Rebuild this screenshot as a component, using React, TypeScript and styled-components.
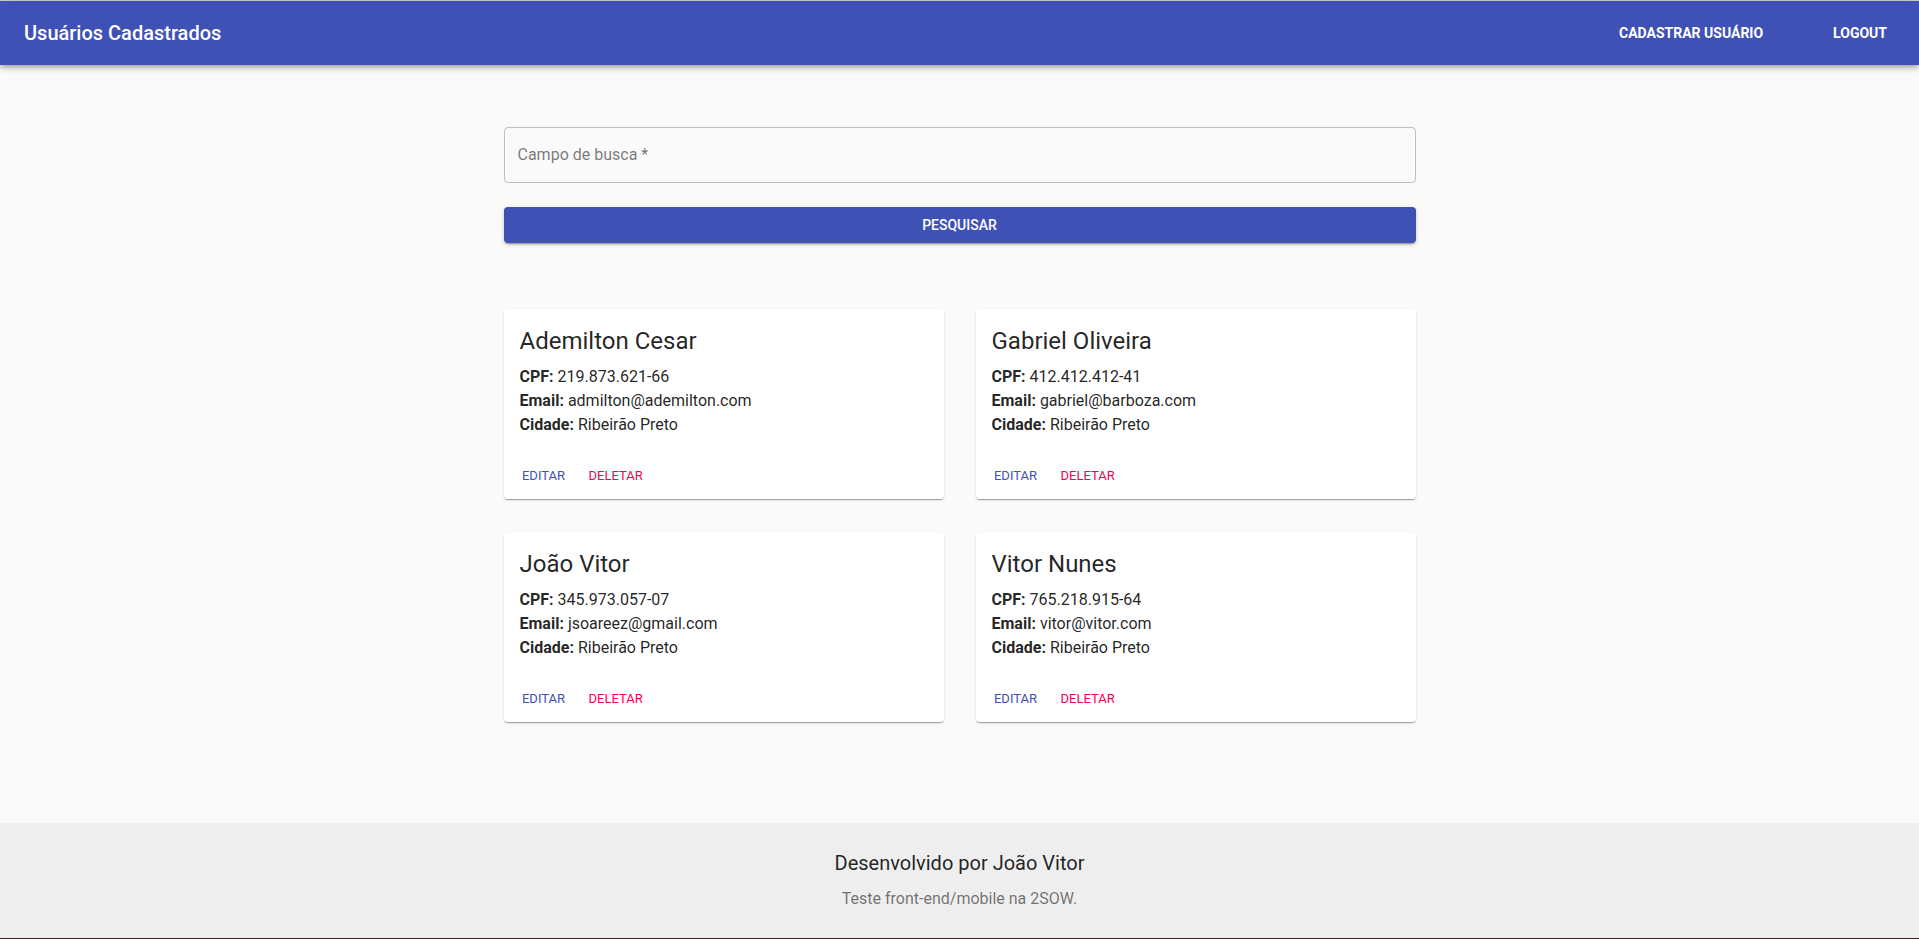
import React, { useState } from "react";
import styled, { createGlobalStyle } from "styled-components";

const GlobalStyle = createGlobalStyle`
  *, *::before, *::after { box-sizing: border-box; }
  body {
    margin: 0;
    background: #fafafa;
    color: rgba(0, 0, 0, 0.87);
    font-family: Roboto, "Liberation Sans", sans-serif;
    font-size: 16px;
    line-height: 24px;
  }
`;

const Page = styled.div`
  display: flex;
  flex-direction: column;
  min-height: 100vh;
  border-top: 1px solid #d0d0d0;
  border-bottom: 1px solid #3a2226;
`;

const AppBar = styled.header`
  display: flex;
  align-items: center;
  justify-content: space-between;
  min-height: 64px;
  padding: 0 24px;
  background: #3f51b5;
  color: #fff;
  box-shadow: 0 2px 4px -1px rgba(0, 0, 0, 0.2), 0 4px 5px 0 rgba(0, 0, 0, 0.14),
    0 1px 10px 0 rgba(0, 0, 0, 0.12);
`;

const AppTitle = styled.h1`
  margin: 0;
  font-size: 20px;
  font-weight: 500;
  line-height: 32px;
`;

const Nav = styled.nav`
  display: flex;
  gap: 54px;
`;

const NavLink = styled.a`
  padding: 6px 8px;
  color: inherit;
  font-size: 14px;
  font-weight: 700;
  line-height: 24px;
  text-decoration: none;
  text-transform: uppercase;
`;

const Main = styled.main`
  flex: 1;
  width: 100%;
  max-width: 960px;
  margin: 0 auto;
  padding: 62px 24px 100px;
`;

const SearchForm = styled.form`
  display: flex;
  flex-direction: column;
  gap: 24px;
  margin-bottom: 66px;
`;

const Field = styled.div`
  position: relative;
`;

const FieldLabel = styled.label`
  position: absolute;
  top: 16px;
  left: 14px;
  color: rgba(0, 0, 0, 0.54);
  pointer-events: none;
`;

const FieldInput = styled.input`
  display: block;
  width: 100%;
  height: 56px;
  padding: 0 14px;
  border: 1px solid rgba(0, 0, 0, 0.23);
  border-radius: 4px;
  background: transparent;
  color: inherit;
  font: inherit;

  &:focus {
    outline: 1px solid #3f51b5;
    border-color: #3f51b5;
  }

  &:not(:placeholder-shown) + ${FieldLabel} {
    top: -12px;
    padding: 0 4px;
    background: #fafafa;
    font-size: 12px;
  }
`;

const SearchButton = styled.button`
  padding: 6px 16px;
  border: 0;
  border-radius: 4px;
  background: #3f51b5;
  color: #fff;
  font-family: inherit;
  font-size: 14px;
  font-weight: 500;
  line-height: 24px;
  text-transform: uppercase;
  cursor: pointer;
  box-shadow: 0 3px 1px -2px rgba(0, 0, 0, 0.2), 0 2px 2px 0 rgba(0, 0, 0, 0.14),
    0 1px 5px 0 rgba(0, 0, 0, 0.12);
`;

const CardGrid = styled.section`
  display: grid;
  grid-template-columns: repeat(auto-fill, minmax(min(400px, 100%), 1fr));
  gap: 33px 32px;
`;

const Card = styled.article`
  border-radius: 4px;
  background: #fff;
  box-shadow: 0 2px 1px -1px rgba(0, 0, 0, 0.2), 0 1px 1px 0 rgba(0, 0, 0, 0.14),
    0 1px 3px 0 rgba(0, 0, 0, 0.12);
`;

const CardContent = styled.div`
  padding: 16px;
`;

const CardTitle = styled.h2`
  margin: 0 0 8px;
  font-size: 24px;
  font-weight: 400;
  line-height: 32px;
`;

const CardLine = styled.p`
  margin: 0;
`;

const CardActions = styled.div`
  display: flex;
  gap: 8px;
  padding: 8px;
`;

const CardButton = styled.button<{ $color: string }>`
  min-width: 64px;
  padding: 4px 5px;
  border: 0;
  border-radius: 4px;
  background: transparent;
  color: ${(p) => p.$color};
  font-family: inherit;
  font-size: 13px;
  font-weight: 400;
  line-height: 22px;
  text-transform: uppercase;
  cursor: pointer;
`;

const Footer = styled.footer`
  padding: 24px;
  background: #eee;
  text-align: center;
`;

const FooterTitle = styled.h2`
  margin: 0 0 8px;
  font-size: 20px;
  font-weight: 400;
  line-height: 32px;
`;

const FooterText = styled.p`
  margin: 0 0 3px;
  color: rgba(0, 0, 0, 0.54);
`;

const users = [
  { name: "Ademilton Cesar", cpf: "219.873.621-66", email: "admilton@ademilton.com", city: "Ribeirão Preto" },
  { name: "Gabriel Oliveira", cpf: "412.412.412-41", email: "gabriel@barboza.com", city: "Ribeirão Preto" },
  { name: "João Vitor", cpf: "345.973.057-07", email: "jsoareez@gmail.com", city: "Ribeirão Preto" },
  { name: "Vitor Nunes", cpf: "765.218.915-64", email: "vitor@vitor.com", city: "Ribeirão Preto" },
];

export default function App() {
  const [query, setQuery] = useState("");

  return (
    <>
      <GlobalStyle />
      <Page>
        <AppBar>
          <AppTitle>Usuários Cadastrados</AppTitle>
          <Nav>
            <NavLink href="#cadastrar">Cadastrar usuário</NavLink>
            <NavLink href="#logout">Logout</NavLink>
          </Nav>
        </AppBar>
        <Main>
          <SearchForm onSubmit={(e) => e.preventDefault()}>
            <Field>
              <FieldInput
                id="busca"
                required
                placeholder=" "
                value={query}
                onChange={(e) => setQuery(e.target.value)}
              />
              <FieldLabel htmlFor="busca">Campo de busca *</FieldLabel>
            </Field>
            <SearchButton type="submit">Pesquisar</SearchButton>
          </SearchForm>
          <CardGrid>
            {users.map((user) => (
              <Card key={user.cpf}>
                <CardContent>
                  <CardTitle>{user.name}</CardTitle>
                  <CardLine><strong>CPF:</strong> {user.cpf}</CardLine>
                  <CardLine><strong>Email:</strong> {user.email}</CardLine>
                  <CardLine><strong>Cidade:</strong> {user.city}</CardLine>
                </CardContent>
                <CardActions>
                  <CardButton type="button" $color="#3f51b5">Editar</CardButton>
                  <CardButton type="button" $color="#f50057">Deletar</CardButton>
                </CardActions>
              </Card>
            ))}
          </CardGrid>
        </Main>
        <Footer>
          <FooterTitle>Desenvolvido por João Vitor</FooterTitle>
          <FooterText>Teste front-end/mobile na 2SOW.</FooterText>
        </Footer>
      </Page>
    </>
  );
}
